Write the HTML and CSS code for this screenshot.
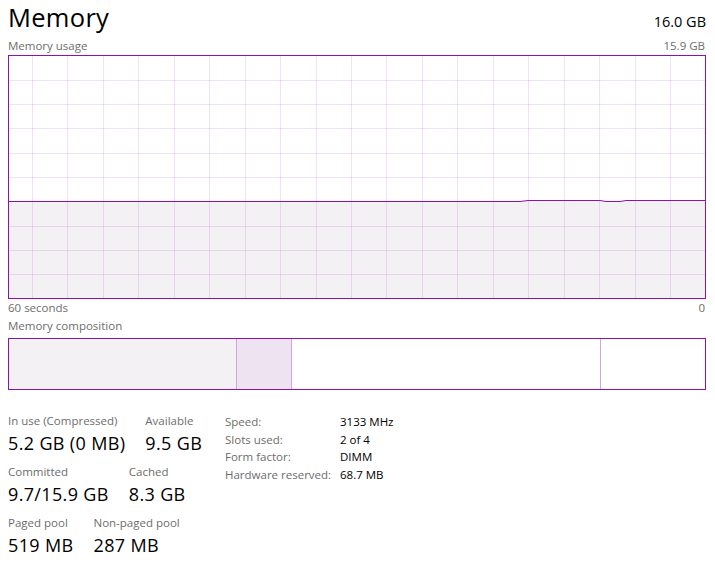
FILE: index.html
```html
<!DOCTYPE html>
<html>
<head>
<meta charset="utf-8">
<link rel="stylesheet" href="styles.css">
</head>
<body>
<div class="page">
  <div class="header">
    <div class="title">Memory</div>
    <div class="total">16.0 GB</div>
  </div>
  <div class="caption-row usage-row">
    <span>Memory usage</span>
    <span>15.9 GB</span>
  </div>
  <svg class="graph" width="698" height="244" viewBox="0 0 698 244">
    <rect x="0" y="146" width="698" height="98" fill="#f3f1f4"/>
    <g stroke="rgba(139,18,174,0.12)" stroke-width="1">
      <line x1="24.5" y1="0" x2="24.5" y2="244"/>
      <line x1="59.5" y1="0" x2="59.5" y2="244"/>
      <line x1="95.5" y1="0" x2="95.5" y2="244"/>
      <line x1="130.5" y1="0" x2="130.5" y2="244"/>
      <line x1="166.5" y1="0" x2="166.5" y2="244"/>
      <line x1="201.5" y1="0" x2="201.5" y2="244"/>
      <line x1="237.5" y1="0" x2="237.5" y2="244"/>
      <line x1="272.5" y1="0" x2="272.5" y2="244"/>
      <line x1="308.5" y1="0" x2="308.5" y2="244"/>
      <line x1="343.5" y1="0" x2="343.5" y2="244"/>
      <line x1="378.5" y1="0" x2="378.5" y2="244"/>
      <line x1="414.5" y1="0" x2="414.5" y2="244"/>
      <line x1="449.5" y1="0" x2="449.5" y2="244"/>
      <line x1="485.5" y1="0" x2="485.5" y2="244"/>
      <line x1="520.5" y1="0" x2="520.5" y2="244"/>
      <line x1="556.5" y1="0" x2="556.5" y2="244"/>
      <line x1="591.5" y1="0" x2="591.5" y2="244"/>
      <line x1="627.5" y1="0" x2="627.5" y2="244"/>
      <line x1="662.5" y1="0" x2="662.5" y2="244"/>
      <line x1="0" y1="25.5" x2="698" y2="25.5"/>
      <line x1="0" y1="49.5" x2="698" y2="49.5"/>
      <line x1="0" y1="73.5" x2="698" y2="73.5"/>
      <line x1="0" y1="98.5" x2="698" y2="98.5"/>
      <line x1="0" y1="122.5" x2="698" y2="122.5"/>
      <line x1="0" y1="171.5" x2="698" y2="171.5"/>
      <line x1="0" y1="195.5" x2="698" y2="195.5"/>
      <line x1="0" y1="219.5" x2="698" y2="219.5"/>
    </g>
    <polyline fill="none" stroke="#8b12ae" stroke-width="1" points="0,146.5 512,146.5 520,145.5 592,145.5 598,146.5 612,146.5 618,145.5 698,145.5"/>
    <rect x="0.5" y="0.5" width="697" height="243" fill="none" stroke="#8b12ae" stroke-width="1"/>
  </svg>
  <div class="caption-row axis-row">
    <span>60 seconds</span>
    <span>0</span>
  </div>
  <div class="caption-row comp-label">
    <span>Memory composition</span>
  </div>
  <div class="comp-bar">
    <div class="seg seg-inuse" style="width:227px"></div>
    <div class="seg seg-modified" style="width:54px"></div>
    <div class="seg seg-standby" style="width:308px"></div>
    <div class="seg seg-free"></div>
  </div>
  <div class="stats">
    <div class="stats-left">
      <div class="stat-row">
        <div class="stat"><div class="stat-label">In use (Compressed)</div><div class="stat-value">5.2 GB (0 MB)</div></div>
        <div class="stat"><div class="stat-label">Available</div><div class="stat-value">9.5 GB</div></div>
      </div>
      <div class="stat-row">
        <div class="stat"><div class="stat-label">Committed</div><div class="stat-value">9.7/15.9 GB</div></div>
        <div class="stat"><div class="stat-label">Cached</div><div class="stat-value">8.3 GB</div></div>
      </div>
      <div class="stat-row">
        <div class="stat"><div class="stat-label">Paged pool</div><div class="stat-value">519 MB</div></div>
        <div class="stat"><div class="stat-label">Non-paged pool</div><div class="stat-value">287 MB</div></div>
      </div>
    </div>
    <div class="stats-right">
      <span class="prop-label">Speed:</span><span class="prop-value">3133 MHz</span>
      <span class="prop-label">Slots used:</span><span class="prop-value">2 of 4</span>
      <span class="prop-label">Form factor:</span><span class="prop-value">DIMM</span>
      <span class="prop-label">Hardware reserved:</span><span class="prop-value">68.7 MB</span>
    </div>
  </div>
</div>
</body>
</html>
```
FILE: styles.css
```css
html, body {
  margin: 0;
  padding: 0;
  background: #ffffff;
}
body {
  font-family: "Segoe UI", "Open Sans", "Noto Sans", sans-serif;
  color: #000000;
}
.page {
  padding-left: 8px;
  width: 698px;
}
.header {
  display: flex;
  justify-content: space-between;
  align-items: baseline;
  height: 37px;
}
.title {
  font-size: 25.5px;
  font-weight: 400;
  line-height: 34px;
  letter-spacing: 0.3px;
}
.total {
  font-size: 14.5px;
  line-height: 34px;
}
.caption-row {
  display: flex;
  justify-content: space-between;
  font-size: 11.5px;
  line-height: 16px;
  color: #6d6d6d;
  padding-right: 1px;
}
.usage-row {
  height: 18px;
  margin-top: 1px;
  margin-bottom: -1px;
}
.graph {
  display: block;
}
.axis-row {
  margin-top: 1px;
  margin-bottom: -1px;
}
.comp-label {
  margin-top: 3px;
  height: 20px;
}
.comp-bar {
  display: flex;
  height: 50px;
  border: 1px solid #8b12ae;
  box-sizing: content-box;
  width: 696px;
}
.seg {
  height: 100%;
  border-right: 1px solid #cfa6dc;
}
.seg-inuse { background: #f3f1f4; }
.seg-modified { background: #ede3f1; }
.seg-standby { background: #ffffff; }
.seg-free { flex: 1; border-right: none; background: #ffffff; }
.stats {
  display: grid;
  grid-template-columns: 217px auto;
  margin-top: 23px;
}
.stats-left {
  display: flex;
  flex-direction: column;
  gap: 9px;
}
.stat-row {
  display: flex;
  gap: 20px;
}
.stat-label {
  font-size: 11.5px;
  line-height: 16px;
  color: #6d6d6d;
}
.stat-value {
  font-size: 18px;
  line-height: 24px;
  margin-top: 2px;
  letter-spacing: 0.35px;
}
.stats-right {
  display: grid;
  grid-template-columns: 115px auto;
  align-content: start;
  font-size: 11.5px;
  line-height: 17.5px;
}
.prop-label {
  color: #6d6d6d;
}
.prop-value {
  color: #000000;
}
```
